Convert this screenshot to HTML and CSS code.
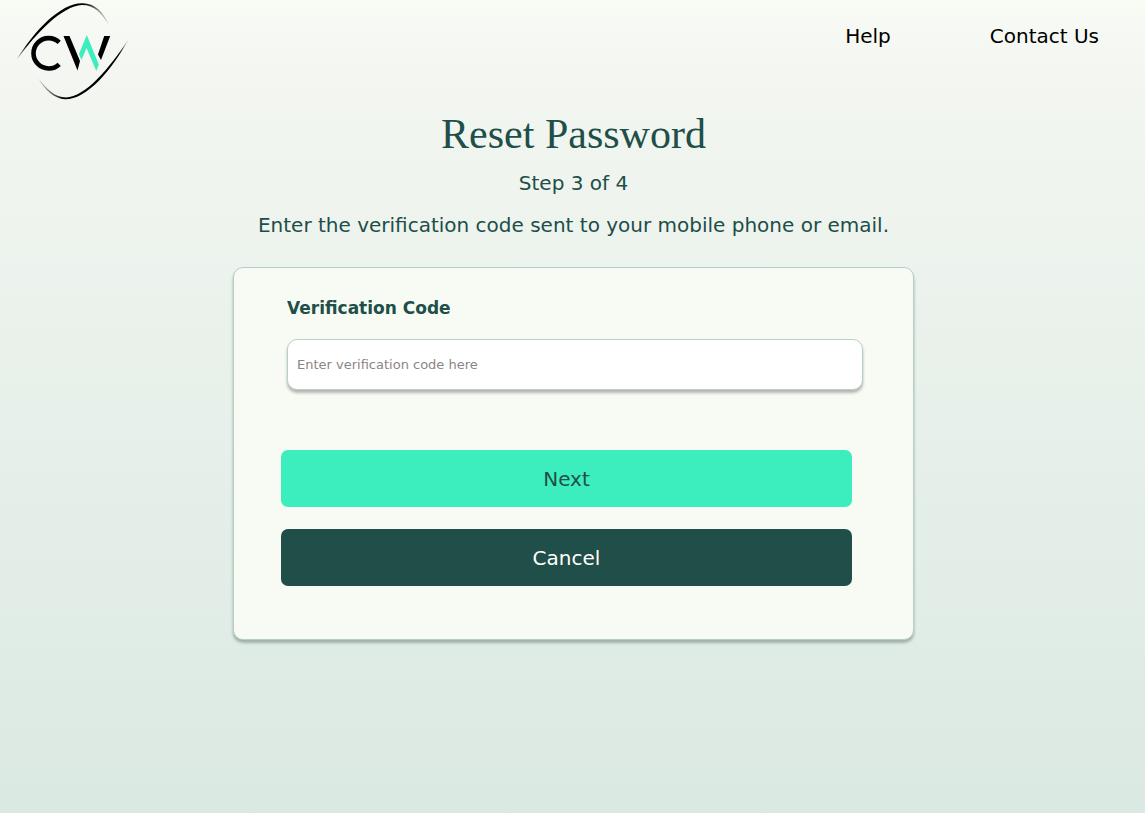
FILE: index.html
```html
<!DOCTYPE html>
<html lang="en">
<head>
<meta charset="utf-8">
<meta name="viewport" content="width=device-width, initial-scale=1">
<title>Reset Password</title>
<link rel="stylesheet" href="styles.css">
</head>
<body>
<header class="site-header">
  <a class="logo" href="#" aria-label="CW home">
    <svg viewBox="0 0 130 104" width="130" height="104" aria-hidden="true">
      <defs>
        <linearGradient id="arc-top" gradientUnits="userSpaceOnUse" x1="17" y1="60" x2="108" y2="25">
          <stop offset="0" stop-color="#000" stop-opacity=".3"/>
          <stop offset=".15" stop-color="#000"/>
          <stop offset=".85" stop-color="#000"/>
          <stop offset="1" stop-color="#000" stop-opacity=".3"/>
        </linearGradient>
        <linearGradient id="arc-bottom" gradientUnits="userSpaceOnUse" x1="39" y1="79" x2="128" y2="39">
          <stop offset="0" stop-color="#000" stop-opacity=".3"/>
          <stop offset=".15" stop-color="#000"/>
          <stop offset=".85" stop-color="#000"/>
          <stop offset="1" stop-color="#000" stop-opacity=".3"/>
        </linearGradient>
      </defs>
      <path fill="url(#arc-top)" d="M16.500 60C34 31 60 3.500 82 3.300C95 3 103 12 109 25C102 13 94 4.800 82 4.900C62 6 37 32 16.500 60Z"/>
      <path fill="url(#arc-bottom)" d="M129 38.500C112 70 87 99.500 65 99.300C54 98.500 45 90 38.500 78.500C46 89 55 97.300 66 97.500C85 97 109 69 129 38.500Z"/>
      <path fill="none" stroke="#000" stroke-width="4.600" d="M59.200 42.300A15.200 15.200 0 1 0 59.200 64.300"/>
      <path d="M63.500 36H69.500L80 61L77.500 70.500ZM104.200 36H110.200L101 60L98 54.500Z"/>
      <path fill="#3ceebd" d="M86.800 35L98.800 64.500L96.300 71L86.500 48L81.500 60L79 54Z"/>
    </svg>
  </a>
  <nav class="site-nav" aria-label="Main">
    <a href="#">Help</a>
    <a href="#">Contact Us</a>
  </nav>
</header>
<main class="reset">
  <h1 class="title">Reset Password</h1>
  <p class="step">Step 3 of 4</p>
  <p class="instructions">Enter the verification code sent to your mobile phone or email.</p>
  <form class="card">
    <div class="field">
      <label class="field-label" for="code">Verification Code</label>
      <input class="field-input" id="code" type="text" autocomplete="one-time-code" placeholder="Enter verification code here">
    </div>
    <div class="actions">
      <button class="button button-next" type="submit">Next</button>
      <button class="button button-cancel" type="button">Cancel</button>
    </div>
  </form>
</main>
</body>
</html>
```

FILE: styles.css
```css
* {
  box-sizing: border-box;
}

body {
  margin: 0;
  min-height: 100vh;
  color: #204e48;
  background: linear-gradient(#f9fcf5 0, #f3f6f1 9%, #dae9e2 100%);
  font-family: Verdana, "DejaVu Sans", sans-serif;
  font-size: 20px;
  line-height: 24px;
}

.site-header {
  display: flex;
  justify-content: space-between;
  align-items: flex-start;
}

.logo,
.logo svg {
  display: block;
}

.site-nav {
  display: flex;
  gap: 99px;
  padding: 24px 46px 0 0;
}

.site-nav a {
  color: #000;
  text-decoration: none;
}

.reset {
  display: flex;
  flex-direction: column;
  align-items: center;
  padding: 4px 14px 32px 16px;
  text-align: center;
}

.title {
  margin: 0;
  font-family: Georgia, "Liberation Serif", serif;
  font-size: 42px;
  font-weight: 400;
  line-height: 52px;
}

.step {
  margin: 11px 0 0;
}

.instructions {
  margin: 18px 0 0;
}

.card {
  width: 100%;
  max-width: 681px;
  margin-top: 30px;
  padding-bottom: 53px;
  border: 1px solid #b5cec8;
  border-radius: 10px;
  background: #f8fbf4;
  box-shadow: 0 3px 3px #a0b0aa;
  text-align: left;
}

.field {
  padding: 28px 50px 0 53px;
}

.field-label {
  display: block;
  font-size: 17px;
  font-weight: 700;
}

.field-input {
  width: 100%;
  height: 51px;
  margin-top: 19px;
  padding: 0 9px;
  border: 1px solid #b5d2ca;
  border-radius: 10px;
  background: #fff;
  box-shadow: 0 3px 3px #b4b6b2;
  color: #204e48;
  font: 13px Verdana, "DejaVu Sans", sans-serif;
}

.field-input::placeholder {
  color: #8b8585;
  opacity: 1;
}

.actions {
  display: grid;
  gap: 22px;
  padding: 60px 61px 0 47px;
}

.button {
  height: 57px;
  border: 0;
  border-radius: 7px;
  font: inherit;
  cursor: pointer;
}

.button-next {
  background: #3ceebd;
  color: #204e48;
}

.button-cancel {
  background: #204e48;
  color: #fff;
}
```
